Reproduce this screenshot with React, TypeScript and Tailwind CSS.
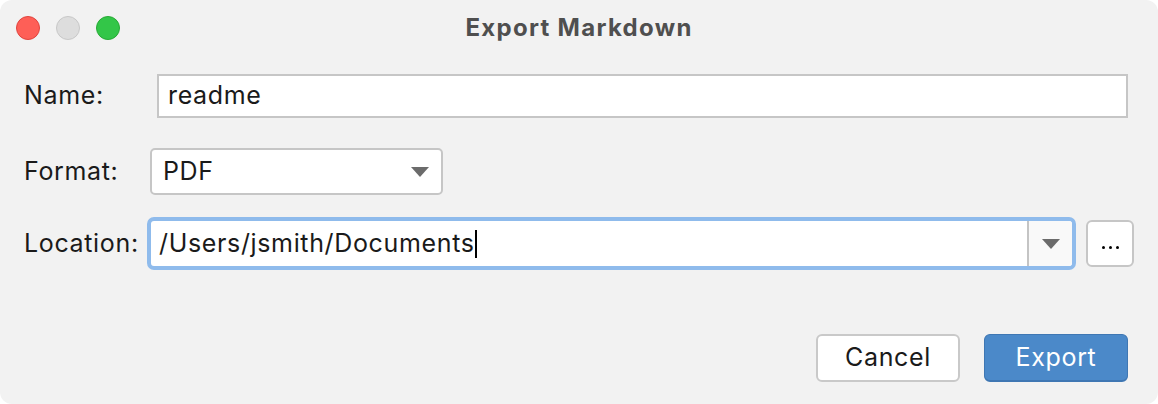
import { FC } from "react";

const Caret: FC = () => (
  <svg width="18" height="10" viewBox="0 0 18 10">
    <path d="M0 0 H18 L9 10 Z" fill="#6b6b6b" />
  </svg>
);

const App: FC = () => {
  return (
    <div className="w-[1158px] h-[404px] bg-white font-['Inter',sans-serif] text-[25px] tracking-[0.65px] text-[#1a1a1a]">
      <div className="w-full h-full rounded-[12px] bg-[#f2f2f2] flex flex-col">
        <div className="relative h-[56px] flex items-center justify-center">
          <div className="absolute left-[16px] top-[16px] flex gap-[16px]">
            <div className="w-[24px] h-[24px] rounded-full bg-[#fe5f57] border border-[#e0443e]" />
            <div className="w-[24px] h-[24px] rounded-full bg-[#dddddd] border border-[#c8c8c8]" />
            <div className="w-[24px] h-[24px] rounded-full bg-[#33c648] border border-[#27aa35]" />
          </div>
          <span className="font-bold text-[#4f4f4f] text-[24px] tracking-[1.3px] pb-[1px]">Export Markdown</span>
        </div>

        <div className="flex items-center mt-[18px] pl-[24px] pr-[30px]">
          <span className="w-[133px]">Name:</span>
          <div className="flex-1 h-[44px] bg-white border-2 border-[#c6c6c6] flex items-center px-[9px]">
            readme
          </div>
        </div>

        <div className="flex items-center mt-[30px] pl-[24px]">
          <span className="w-[126px]">Format:</span>
          <div className="w-[293px] h-[47px] bg-white border-2 border-[#c6c6c6] rounded-[5px] flex items-center justify-between pl-[11px] pr-[12px]">
            <span>PDF</span>
            <Caret />
          </div>
        </div>

        <div className="flex items-center mt-[22px] pl-[24px] pr-[24px]">
          <span className="w-[123px]">Location:</span>
          <div className="flex-1 h-[53px] rounded-[7px] border-[4px] border-[#8fbbec] bg-white flex">
            <div className="flex-1 flex items-center pl-[8px]">
              <span>/Users/jsmith/Documents</span>
              <span className="w-[2px] h-[28px] bg-black" />
            </div>
            <div className="w-[45px] bg-[#f9f9f9] border-l-2 border-[#c4c4c4] rounded-r-[3px] flex items-center justify-center">
              <Caret />
            </div>
          </div>
          <div className="ml-[10px] w-[48px] h-[47px] bg-white border-2 border-[#c6c6c6] rounded-[6px] flex items-center justify-center gap-[4px] pt-[8px]">
            <span className="w-[3px] h-[3px] rounded-full bg-black" />
            <span className="w-[3px] h-[3px] rounded-full bg-black" />
            <span className="w-[3px] h-[3px] rounded-full bg-black" />
          </div>
        </div>

        <div className="flex justify-end gap-[24px] mt-auto mb-[22px] pr-[30px]">
          <button className="w-[144px] h-[48px] bg-white border-2 border-[#c9c9c9] rounded-[6px]">
            Cancel
          </button>
          <button className="w-[144px] h-[48px] bg-[#4b89c9] border border-[#3f77b3] border-b-2 rounded-[6px] text-white">
            Export
          </button>
        </div>
      </div>
    </div>
  );
};

export default App;
